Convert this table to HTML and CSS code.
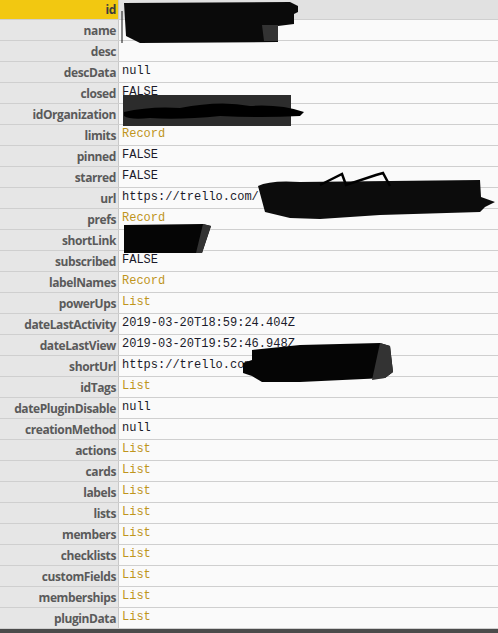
FILE: index.html
```html
<!DOCTYPE html>
<html>
<head>
<meta charset="utf-8">
<link rel="stylesheet" href="styles.css">
</head>
<body>
<div class="view">
  <div class="table">
    <div class="row head"><div class="key">id</div><div class="val"></div></div>
    <div class="row"><div class="key">name</div><div class="val"></div></div>
    <div class="row"><div class="key">desc</div><div class="val"></div></div>
    <div class="row"><div class="key">descData</div><div class="val">null</div></div>
    <div class="row"><div class="key">closed</div><div class="val">FALSE</div></div>
    <div class="row"><div class="key">idOrganization</div><div class="val"></div></div>
    <div class="row"><div class="key">limits</div><div class="val link">Record</div></div>
    <div class="row"><div class="key">pinned</div><div class="val">FALSE</div></div>
    <div class="row"><div class="key">starred</div><div class="val">FALSE</div></div>
    <div class="row"><div class="key">url</div><div class="val">https://trello.com/</div></div>
    <div class="row"><div class="key">prefs</div><div class="val link">Record</div></div>
    <div class="row"><div class="key">shortLink</div><div class="val"></div></div>
    <div class="row"><div class="key">subscribed</div><div class="val">FALSE</div></div>
    <div class="row"><div class="key">labelNames</div><div class="val link">Record</div></div>
    <div class="row"><div class="key">powerUps</div><div class="val link">List</div></div>
    <div class="row"><div class="key">dateLastActivity</div><div class="val">2019-03-20T18:59:24.404Z</div></div>
    <div class="row"><div class="key">dateLastView</div><div class="val">2019-03-20T19:52:46.948Z</div></div>
    <div class="row"><div class="key">shortUrl</div><div class="val">https://trello.com</div></div>
    <div class="row"><div class="key">idTags</div><div class="val link">List</div></div>
    <div class="row"><div class="key">datePluginDisable</div><div class="val">null</div></div>
    <div class="row"><div class="key">creationMethod</div><div class="val">null</div></div>
    <div class="row"><div class="key">actions</div><div class="val link">List</div></div>
    <div class="row"><div class="key">cards</div><div class="val link">List</div></div>
    <div class="row"><div class="key">labels</div><div class="val link">List</div></div>
    <div class="row"><div class="key">lists</div><div class="val link">List</div></div>
    <div class="row"><div class="key">members</div><div class="val link">List</div></div>
    <div class="row"><div class="key">checklists</div><div class="val link">List</div></div>
    <div class="row"><div class="key">customFields</div><div class="val link">List</div></div>
    <div class="row"><div class="key">memberships</div><div class="val link">List</div></div>
    <div class="row"><div class="key">pluginData</div><div class="val link">List</div></div>
  </div>
  <div class="footer"></div>
  <svg class="redact" width="498" height="633" viewBox="0 0 498 633">
    <path d="M124,3 L290,2 L298,6 L298,12 L294,14 L294,24 L278,26 L278,42 L140,43 L126,36 Z" fill="#0a0a0a"/>
    <path d="M262,25 L278,25 L278,41 L264,41 Z" fill="#333"/>
    <line x1="122" y1="11" x2="122" y2="43" stroke="#111" stroke-width="1"/>
    <rect x="123" y="95" width="168" height="31" fill="#2c2c2c"/>
    <path d="M124,112 Q150,106 180,108 Q220,100 250,106 Q280,104 304,112 L300,116 Q260,118 220,116 Q180,120 150,118 Q130,120 124,116 Z" fill="#000"/>
    <path d="M258,186 Q270,180 300,182 L480,180 L481,197 L495,202 L485,207 L480,212 L380,215 L320,219 L290,218 L265,212 Z" fill="#0c0c0c"/>
    <path d="M320,185 L342,174 L346,185 L376,175 L383,173 L390,186" fill="none" stroke="#000" stroke-width="2.5"/>
    <path d="M124,225 L203,224 L211,226 L202,253 L124,253 Z" fill="#050505"/>
    <path d="M203,224 L211,226 L202,253 L196,253 Z" fill="#333"/>
    <path d="M243,363 L252,360 L252,350 L300,345 L380,343 L390,346 L393,372 L385,378 L300,382 L262,382 L252,376 L243,373 Z" fill="#050505"/>
    <path d="M380,343 L390,346 L393,372 L385,378 L372,380 Z" fill="#333"/>
  </svg>
</div>
</body>
</html>
```

FILE: styles.css
```css
html, body {
  margin: 0;
  padding: 0;
  background: #fafafa;
}

.view {
  position: relative;
  width: 498px;
  height: 633px;
  overflow: hidden;
}

.table {
  display: flex;
  flex-direction: column;
  margin-top: -1px;
}

.row {
  display: grid;
  grid-template-columns: 119px 1fr;
  grid-template-rows: 20px;
  height: 20px;
  border-bottom: 1px solid #cfcfcf;
}

.key {
  height: 20px;
  overflow: hidden;
  background: #e6e6e6;
  border-right: 1px solid #c8c8c8;
  text-align: right;
  padding-right: 2px;
  font-family: "Open Sans", sans-serif;
  font-weight: 700;
  font-size: 12px;
  line-height: 21px;
  color: #5a5a5a;
  letter-spacing: -0.4px;
}

.val {
  height: 20px;
  overflow: hidden;
  box-sizing: border-box;
  background: #fafafa;
  padding-left: 3px;
  padding-top: 1px;
  font-family: "Liberation Mono", "Courier New", monospace;
  font-size: 12px;
  line-height: 16px;
  color: #1a1a2a;
  white-space: nowrap;
}

.link {
  color: #bf951c;
}

.head .key {
  background: #f2c811;
  color: #3c3c3c;
}

.head .val {
  background: #e1e1e1;
}

.footer {
  height: 5px;
  background: #4b4b4b;
}

.redact {
  position: absolute;
  left: 0;
  top: 0;
}
```
